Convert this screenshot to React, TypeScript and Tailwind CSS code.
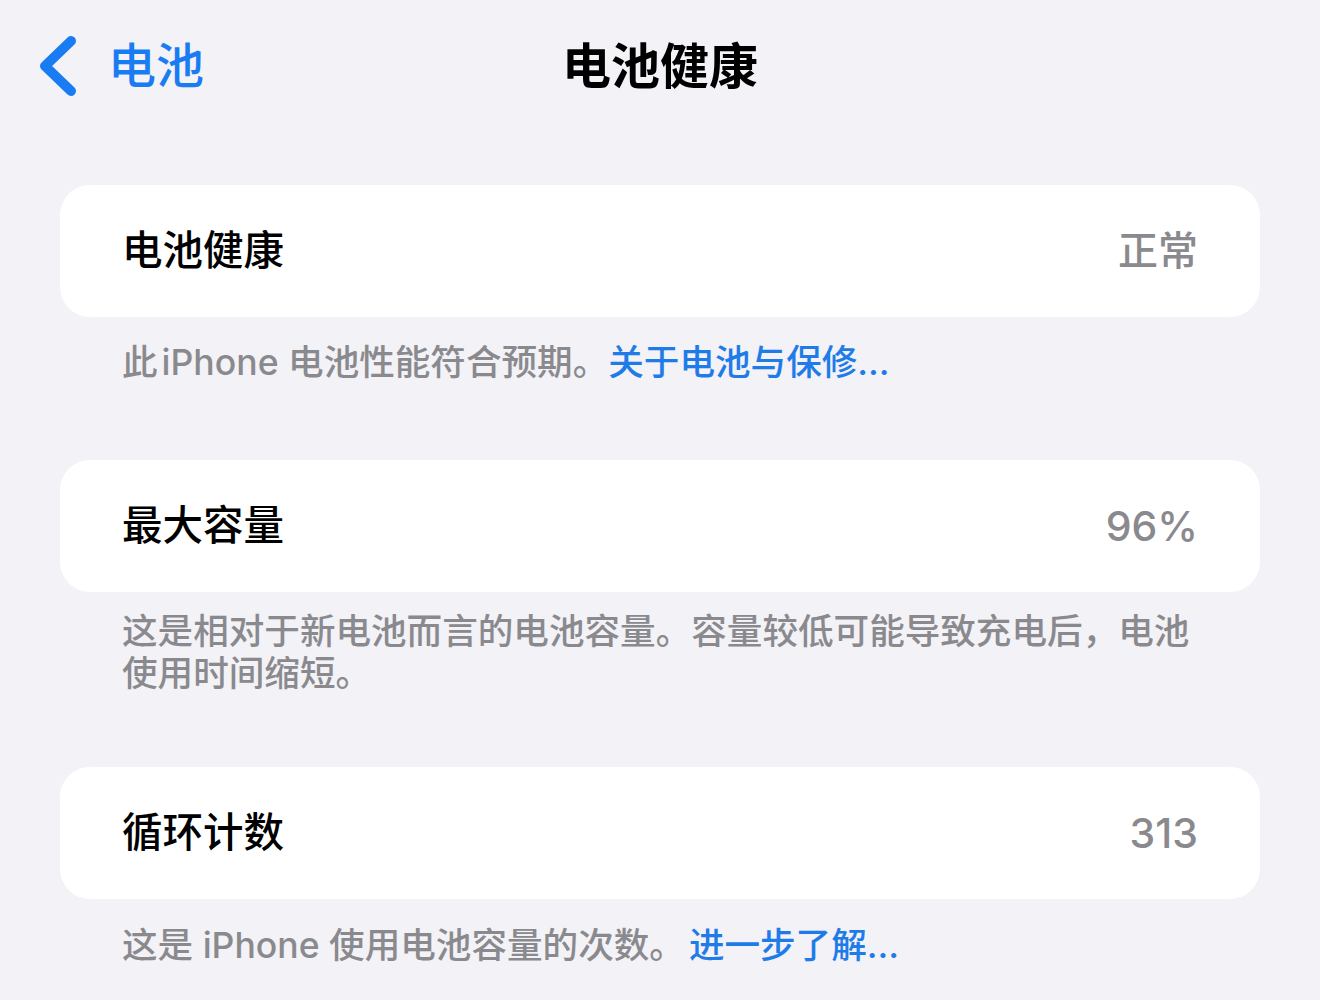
import type { ReactNode } from "react";

const FONT = 'Inter, "Noto Sans CJK SC", sans-serif';

interface RowCardProps {
  label: string;
  value: string;
  numeric?: boolean;
}

// White rounded cell: title on the left, status on the right
function RowCard({ label, value, numeric }: RowCardProps) {
  return (
    <div className="h-[132px] rounded-[30px] bg-white pl-[62px] pr-[62px] flex items-center justify-between">
      <span className="text-[40.5px] font-medium text-black leading-none">{label}</span>
      <span
        className={
          numeric
            ? "text-[41px] font-medium text-[#8a8a8e] leading-none"
            : "text-[40px] font-medium text-[#8a8a8e] leading-none"
        }
      >
        {value}
      </span>
    </div>
  );
}

function Footer({ children, className }: { children: ReactNode; className: string }) {
  return (
    <p className={`px-[62px] text-[35.6px] font-medium leading-[42px] text-[#8a8a8e] ${className}`}>
      {children}
    </p>
  );
}

function Link({ children, className = "" }: { children: ReactNode; className?: string }) {
  return <span className={`text-[#1f7be8] ${className}`}>{children}</span>;
}

export default function App() {
  return (
    <div className="min-h-[1000px] w-full bg-[#f2f2f7]" style={{ fontFamily: FONT }}>
      {/* Navigation bar */}
      <header className="h-[132px] grid grid-cols-[1fr_auto_1fr] items-center">
        <div className="flex items-center pl-[36px]">
          <svg width="40" height="64" viewBox="0 0 40 64" fill="none">
            <polyline
              points="35,7 9,32 35,57"
              stroke="#1a7cf2"
              strokeWidth="10"
              strokeLinecap="round"
              strokeLinejoin="round"
            />
          </svg>
          <span className="ml-[32px] text-[48px] font-medium text-[#1a7cf2] leading-none">电池</span>
        </div>
        <h1 className="text-[49px] font-bold text-black leading-none">电池健康</h1>
        <div />
      </header>

      <main className="px-[60px] pt-[53px]">
        <RowCard label="电池健康" value="正常" />
        <Footer className="pt-[25px]">
          此<span className="ml-[4px]">iPhone</span> 电池性能符合预期。<Link>关于电池与保修...</Link>
        </Footer>

        <div className="mt-[76px]">
          <RowCard label="最大容量" value="96%" numeric />
        </div>
        <Footer className="pt-[19px]">
          这是相对于新电池而言的电池容量。容量较低可能导致充电后，电池
          <br />
          使用时间缩短。
        </Footer>

        <div className="mt-[72px]">
          <RowCard label="循环计数" value="313" numeric />
        </div>
        <Footer className="pt-[26px]">
          这是 iPhone 使用电池容量的次数。<Link className="ml-[4px]">进一步了解...</Link>
        </Footer>
      </main>
    </div>
  );
}
